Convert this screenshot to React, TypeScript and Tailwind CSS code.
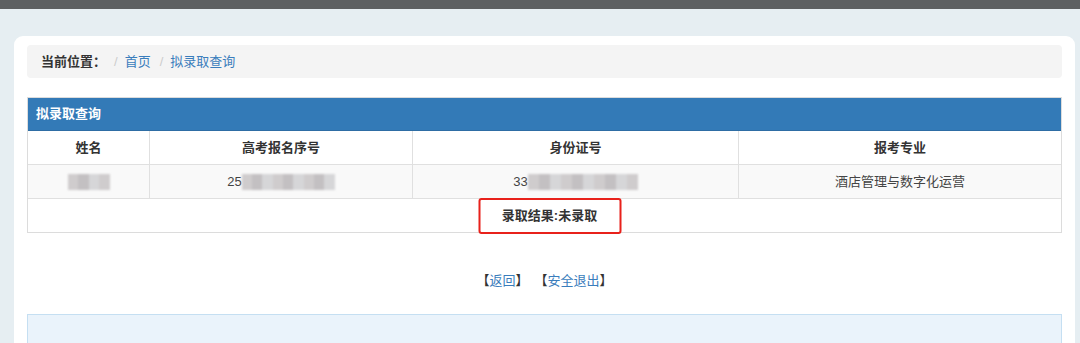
import React from "react";

const font = { fontFamily: '"Liberation Sans", "Noto Sans CJK SC", sans-serif' };

function Blur({ w }: { w: number }) {
  return (
    <span
      className="inline-flex h-[16px] align-middle overflow-hidden blur-[1.2px]"
      style={{ width: w }}
    >
      {Array.from({ length: Math.ceil(w / 11) }).map((_, i) => (
        <span
          key={i}
          className={`h-full w-[11px] ${i % 3 === 0 ? "bg-[#cfcccd]" : i % 3 === 1 ? "bg-[#c3c0c2]" : "bg-[#d6d6d8]"}`}
        />
      ))}
    </span>
  );
}

export default function App() {
  return (
    <div className="w-[1080px] h-[343px] overflow-hidden bg-[#e6eef2] text-[13px] text-[#333]" style={font}>
      <div className="h-[9px] bg-[#5d6062]" />
      <div className="ml-[14px] mr-[5px] mt-[27px] bg-white rounded-[9px] px-[13px] pt-[9px] h-[320px]">
        <div className="h-[33px] bg-[#f4f4f4] rounded-[4px] flex items-center pl-[14px]">
          <span className="font-bold text-[#333]">当前位置：</span>
          <span className="ml-[8px] text-[#ccc]">/</span>
          <span className="ml-[7px] text-[#3a7dbc]">首页</span>
          <span className="ml-[9px] text-[#ccc]">/</span>
          <span className="ml-[7px] text-[#3a7dbc]">拟录取查询</span>
        </div>
        <div className="mt-[19px] border border-[#dcdcdc] relative">
          <div className="h-[33px] bg-[#337ab7] border-b border-[#2e6da4] flex items-center pl-[8px] text-white font-bold">
            拟录取查询
          </div>
          <div className="grid grid-cols-[122px_263px_326px_1fr] h-[34px] border-b border-[#e0e0e0] font-bold">
            <div className="flex items-center justify-center border-r border-[#e0e0e0]">姓名</div>
            <div className="flex items-center justify-center border-r border-[#e0e0e0]">高考报名序号</div>
            <div className="flex items-center justify-center border-r border-[#e0e0e0]">身份证号</div>
            <div className="flex items-center justify-center">报考专业</div>
          </div>
          <div className="grid grid-cols-[122px_263px_326px_1fr] h-[34px] border-b border-[#e0e0e0] bg-[#f9f9f9]">
            <div className="flex items-center justify-center border-r border-[#e0e0e0]">
              <Blur w={42} />
            </div>
            <div className="flex items-center justify-center border-r border-[#e0e0e0] text-[#444]">
              <span>25</span>
              <Blur w={93} />
            </div>
            <div className="flex items-center justify-center border-r border-[#e0e0e0] text-[#444]">
              <span>33</span>
              <Blur w={110} />
            </div>
            <div className="flex items-center justify-center text-[#444]">酒店管理与数字化运营</div>
          </div>
          <div className="h-[33px] flex items-center justify-center font-bold pl-[10px]">
            <span className="relative">
              录取结果:未录取
              <span className="absolute left-1/2 top-1/2 -translate-x-1/2 -translate-y-1/2 w-[143px] h-[36px] border-2 border-[#e8211b] rounded-[3px]" />
            </span>
          </div>
        </div>
        <div className="h-[81px] flex items-center justify-center pt-[14px] gap-[6px]">
          <span>
            <span className="text-[#333]">【</span>
            <span className="text-[#3a7dbc]">返回</span>
            <span className="text-[#333]">】</span>
          </span>
          <span>
            <span className="text-[#333]">【</span>
            <span className="text-[#3a7dbc]">安全退出</span>
            <span className="text-[#333]">】</span>
          </span>
        </div>
        <div className="h-[60px] bg-[#eaf3fb] border border-[#c5dff2]" />
      </div>
    </div>
  );
}
